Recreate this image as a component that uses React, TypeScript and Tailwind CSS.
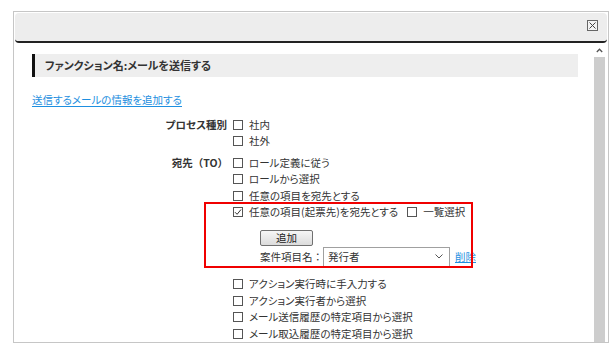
import React from 'react';

const FONT = "font-['Noto_Sans_CJK_JP','Noto_Sans',sans-serif]";

const Box = ({ checked = false }: { checked?: boolean }) => (
  <span className="inline-flex w-[10px] h-[10px] shrink-0 border border-[#555] bg-white items-center justify-center">
    {checked && (
      <svg width="8" height="8" viewBox="0 0 8 8" fill="none">
        <path d="M1 4.2 L3.1 6.3 L7 1.5" stroke="#333" strokeWidth="1" />
      </svg>
    )}
  </span>
);

const Opt = ({ label, checked = false }: { label: string; checked?: boolean }) => (
  <div className="flex items-center gap-[6px] h-[16.5px]">
    <Box checked={checked} />
    <span>{label}</span>
  </div>
);

const App: React.FC = () => {
  return (
    <div className={`relative w-[611px] h-[345px] bg-white overflow-hidden text-[#333] text-[10.5px] [font-feature-settings:'palt'] ${FONT}`}>
      {/* Dialog */}
      <div className="absolute left-[13px] top-[11px] w-[596px] h-[332px] border border-[#c6c6c6] bg-white flex flex-col">
        {/* Title bar */}
        <div className="mx-[1px] mt-[1px] h-[30px] bg-[#ededed] rounded-[4px] border-b-2 border-[#222] flex items-center justify-end pr-[9px] pb-[4px] shrink-0">
          <span className="w-[11px] h-[11px] border border-[#666] bg-[#f4f4f4] flex items-center justify-center">
            <svg width="9" height="9" viewBox="0 0 9 9">
              <path d="M1.5 1.5 L7.5 7.5 M7.5 1.5 L1.5 7.5" stroke="#444" strokeWidth="1" />
            </svg>
          </span>
        </div>

        {/* Body */}
        <div className="flex flex-1 min-h-0">
          <div className="flex-1 pl-[18px] pr-[16px] pt-[11px]">
            <div className="h-[23px] bg-[#eeeeee] border-l-[3px] border-[#111] flex items-center pl-[10px] font-bold text-[11px]">
              ファンクション名:メールを送信する
            </div>

            <div className="mt-[15px] leading-[16.5px]">
              <a className="text-[#1e8fe0] underline underline-offset-2 decoration-[#1e8fe0]">送信するメールの情報を追加する</a>
            </div>

            <div className="mt-[8px] flex">
              <div className="w-[196px] pr-[1px] text-right font-bold leading-[16.5px]">プロセス種別</div>
              <div className="ml-[5px] flex flex-col">
                <Opt label="社内" />
                <Opt label="社外" />
              </div>
            </div>

            <div className="mt-[5px] flex">
              <div className="w-[196px] text-right font-bold leading-[16.5px] [font-feature-settings:normal]">宛先（TO）</div>
              <div className="ml-[5px] flex flex-col">
                <Opt label="ロール定義に従う" />
                <Opt label="ロールから選択" />
                <Opt label="任意の項目を宛先とする" />
                <div className="flex items-center h-[16.5px]">
                  <Opt label="任意の項目(起票先)を宛先とする" checked />
                  <div className="ml-[9px]">
                    <Opt label="一覧選択" />
                  </div>
                </div>
                <div className="mt-[9px] ml-[27px]">
                  <button className="w-[53px] h-[16px] border border-[#707070] rounded-[2px] bg-gradient-to-b from-[#f6f6f6] to-[#dcdcdc] text-[10.5px] leading-none text-[#222]">
                    追加
                  </button>
                </div>
                <div className="ml-[27px] mt-[1px] flex items-center h-[20px]">
                  <span className="w-[63px] [font-feature-settings:normal]">案件項目名：</span>
                  <div className="w-[127px] h-[20px] border border-[#a0a0a0] bg-white flex items-center justify-between pl-[4px] pr-[6px]">
                    <span>発行者</span>
                    <svg width="8" height="5" viewBox="0 0 8 5" fill="none">
                      <path d="M0.5 0.5 L4 4 L7.5 0.5" stroke="#555" strokeWidth="1" />
                    </svg>
                  </div>
                  <a className="ml-[5px] text-[#1e8fe0] underline">削除</a>
                </div>
                <div className="mt-[9px] flex flex-col">
                  <Opt label="アクション実行時に手入力する" />
                  <Opt label="アクション実行者から選択" />
                  <Opt label="メール送信履歴の特定項目から選択" />
                  <Opt label="メール取込履歴の特定項目から選択" />
                </div>
              </div>
            </div>
          </div>

          {/* Scrollbar */}
          <div className="w-[11px] mr-[3px] flex flex-col shrink-0">
            <div className="h-[14px] flex items-center justify-center bg-white">
              <svg width="7" height="5" viewBox="0 0 7 5" fill="none">
                <path d="M0.8 4 L3.5 1.2 L6.2 4" stroke="#555" strokeWidth="1.3" />
              </svg>
            </div>
            <div className="flex-1 bg-[#cdcdcd]" />
          </div>
        </div>
      </div>

      {/* Red highlight annotation */}
      <div className="absolute left-[204px] top-[202px] w-[269px] h-[66px] border-[2.5px] border-[#f00000] pointer-events-none" />
    </div>
  );
};

export default App;
